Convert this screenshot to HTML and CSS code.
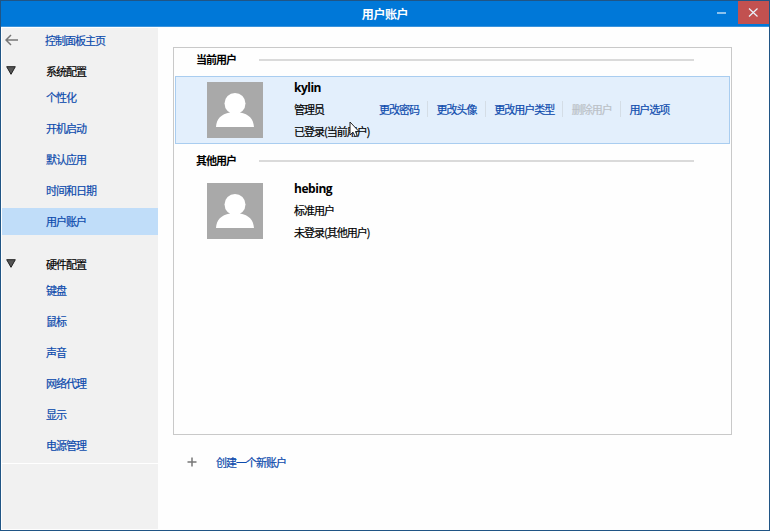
FILE: index.html
```html
<!DOCTYPE html>
<html lang="zh-CN">
<head>
<meta charset="utf-8">
<title>用户账户</title>
<link rel="stylesheet" href="styles.css">
</head>
<body>
<div class="window">
  <header class="titlebar">
    <h1>用户账户</h1>
    <div class="controls">
      <svg class="minimize" viewBox="0 0 31 23"><path d="M10 12h9"/></svg>
      <svg class="close" viewBox="0 0 31 23"><path d="M11 7.500l8.500 8M19.500 7.500l-8.500 8"/></svg>
    </div>
  </header>
  <div class="body">
    <nav class="sidebar">
      <div class="home"><svg class="back" viewBox="0 0 14 12"><path d="M1 6h12M6 1L1 6l5 5"/></svg><a>控制面板主页</a></div>
      <div class="heading"><svg class="arrow" viewBox="0 0 10 9"><path d="M.7.7h8.6L5 8.3z"/></svg><span>系统配置</span></div>
      <ul>
        <li>个性化</li><li>开机启动</li><li>默认应用</li><li>时间和日期</li><li class="selected">用户账户</li>
      </ul>
      <div class="heading second"><svg class="arrow" viewBox="0 0 10 9"><path d="M.7.7h8.6L5 8.3z"/></svg><span>硬件配置</span></div>
      <ul>
        <li>键盘</li><li>鼠标</li><li>声音</li><li>网络代理</li><li>显示</li><li>电源管理</li>
      </ul>
      <div class="rule"></div>
    </nav>
    <main>
      <section class="panel">
        <div class="group"><h2>当前用户</h2><i></i></div>
        <article class="user current">
          <svg class="avatar" viewBox="0 0 56 56"><path class="bg" d="M0 0h56v56H0z"/><circle cx="28" cy="21.500" r="10.500"/><path d="M9 45C9.500 37 14 32 23 30.500V28h10v2.500C42 32 46.500 37 47 45z"/></svg>
          <div class="info"><strong>kylin</strong><span>管理员</span><span>已登录(当前用户)</span></div>
          <div class="actions"><a>更改密码</a><a>更改头像</a><a>更改用户类型</a><a class="disabled">删除用户</a><a>用户选项</a></div>
          <svg class="cursor" viewBox="0 0 11 17"><path d="M1 1v13l3-2.800 2.200 4.300 2-.9L6.500 10.500h3.500z"/></svg>
        </article>
        <div class="group other"><h2>其他用户</h2><i></i></div>
        <article class="user">
          <svg class="avatar" viewBox="0 0 56 56"><path class="bg" d="M0 0h56v56H0z"/><circle cx="28" cy="21.500" r="10.500"/><path d="M9 45C9.500 37 14 32 23 30.500V28h10v2.500C42 32 46.500 37 47 45z"/></svg>
          <div class="info"><strong class="wide">hebing</strong><span>标准用户</span><span>未登录(其他用户)</span></div>
        </article>
      </section>
      <div class="create"><svg viewBox="0 0 10 10"><path d="M5 .5v9M.5 5h9"/></svg><a>创建一个新账户</a></div>
    </main>
  </div>
</div>
</body>
</html>
```
FILE: styles.css
```css
* { box-sizing: border-box; }
body {
  margin: 0;
  font: 400 11px/16px "Noto Sans CJK SC", sans-serif;
  letter-spacing: -1px;
  color: #000;
}
h1, h2, ul { margin: 0; padding: 0; list-style: none; }
svg { display: block; flex: none; fill: none; stroke: #777; }
a, li, span { white-space: nowrap; -webkit-text-stroke: .2px currentColor; }
a, li { color: #0d4bad; }
.window {
  width: 770px; height: 531px;
  display: flex; flex-direction: column;
  border: 1px solid #205585;
  background: #fefefe;
}
.titlebar {
  height: 26px; flex: none;
  display: grid; grid-template-columns: 1fr auto 1fr;
  align-items: start;
  background: #0078d8;
  border-bottom: 1px solid #3a93dc;
}
.titlebar h1 {
  grid-column: 2;
  font-size: 12px; line-height: 25px; font-weight: 700;
  letter-spacing: -.4px;
  color: #fff;
}
.controls { display: flex; justify-content: flex-end; }
.controls svg { width: 31px; height: 23px; stroke: #e9f3fc; }
.minimize { stroke-width: 1.2; }
.close { background: #c25150; stroke-width: 1.2; }
.body { flex: 1; display: flex; padding: 1px 1px 1px; }
.sidebar { width: 156px; flex: none; background: #f1f1f1; }
.home, .heading { display: flex; align-items: center; }
.home { height: 24px; padding-left: 3px; }
.back { width: 14px; height: 12px; margin: -1px 26px 0 0; stroke-width: 1.5; }
.heading { height: 16px; margin-top: 11px; padding-left: 4px; }
.arrow { width: 10px; height: 9px; margin: -2px 30px 0 0; fill: #555; stroke: #222; }
.heading.second { margin: 21px 0 0; }
li { height: 27px; margin-bottom: 4px; padding-left: 44px; line-height: 27px; }
.heading + ul { padding-top: 5px; }
.selected { background: #c0ddf9; }
.rule { height: 1px; background: #fff; }
main { flex: 1; padding: 19px 36px 0 15px; }
.panel { height: 388px; border: 1px solid #c9c9c9; padding: 0 1px; }
.group { display: flex; align-items: center; height: 23px; padding: 0 36px 0 21px; }
.group h2 { width: 63px; font-size: 11px; line-height: 23px; font-weight: 700; color: #000; }
.group i { flex: 1; height: 2px; background: #dadada; }
.other { margin-top: 5px; }
.user { position: relative; display: flex; height: 68px; margin-top: 5px; padding: 6px 0 0 32px; border: 1px solid transparent; }
.current { border-color: #a9cdf0; background: #e3effc; }
.avatar { width: 56px; height: 56px; margin: -1px 31px 0 -1px; fill: #fff; stroke: none; }
.bg { fill: #a9a9a9; }
.info { width: 85px; display: flex; flex-direction: column; gap: 6px; margin-top: -4px; white-space: nowrap; }
.info strong { position: relative; top: 1px; font: 700 12px/16px "Open Sans", sans-serif; letter-spacing: -.5px; color: #000; }
.info .wide { letter-spacing: -.45px; }
.actions { display: flex; height: 16px; margin-top: 18px; }
.actions a { padding-right: 8px; margin-right: 8.600px; border-right: 1px solid #d4dde6; }
.actions a:last-child { border: 0; }
.actions .disabled { color: #bbc1c7; }
.cursor { position: absolute; left: 173px; top: 44px; width: 11px; height: 17px; fill: #fff; stroke: #222; }
.create { display: flex; align-items: center; height: 16px; margin-top: 19px; padding-left: 14px; }
.create svg { width: 10px; height: 10px; margin: 0 19px 0 0; stroke-width: 1.5; }
```
